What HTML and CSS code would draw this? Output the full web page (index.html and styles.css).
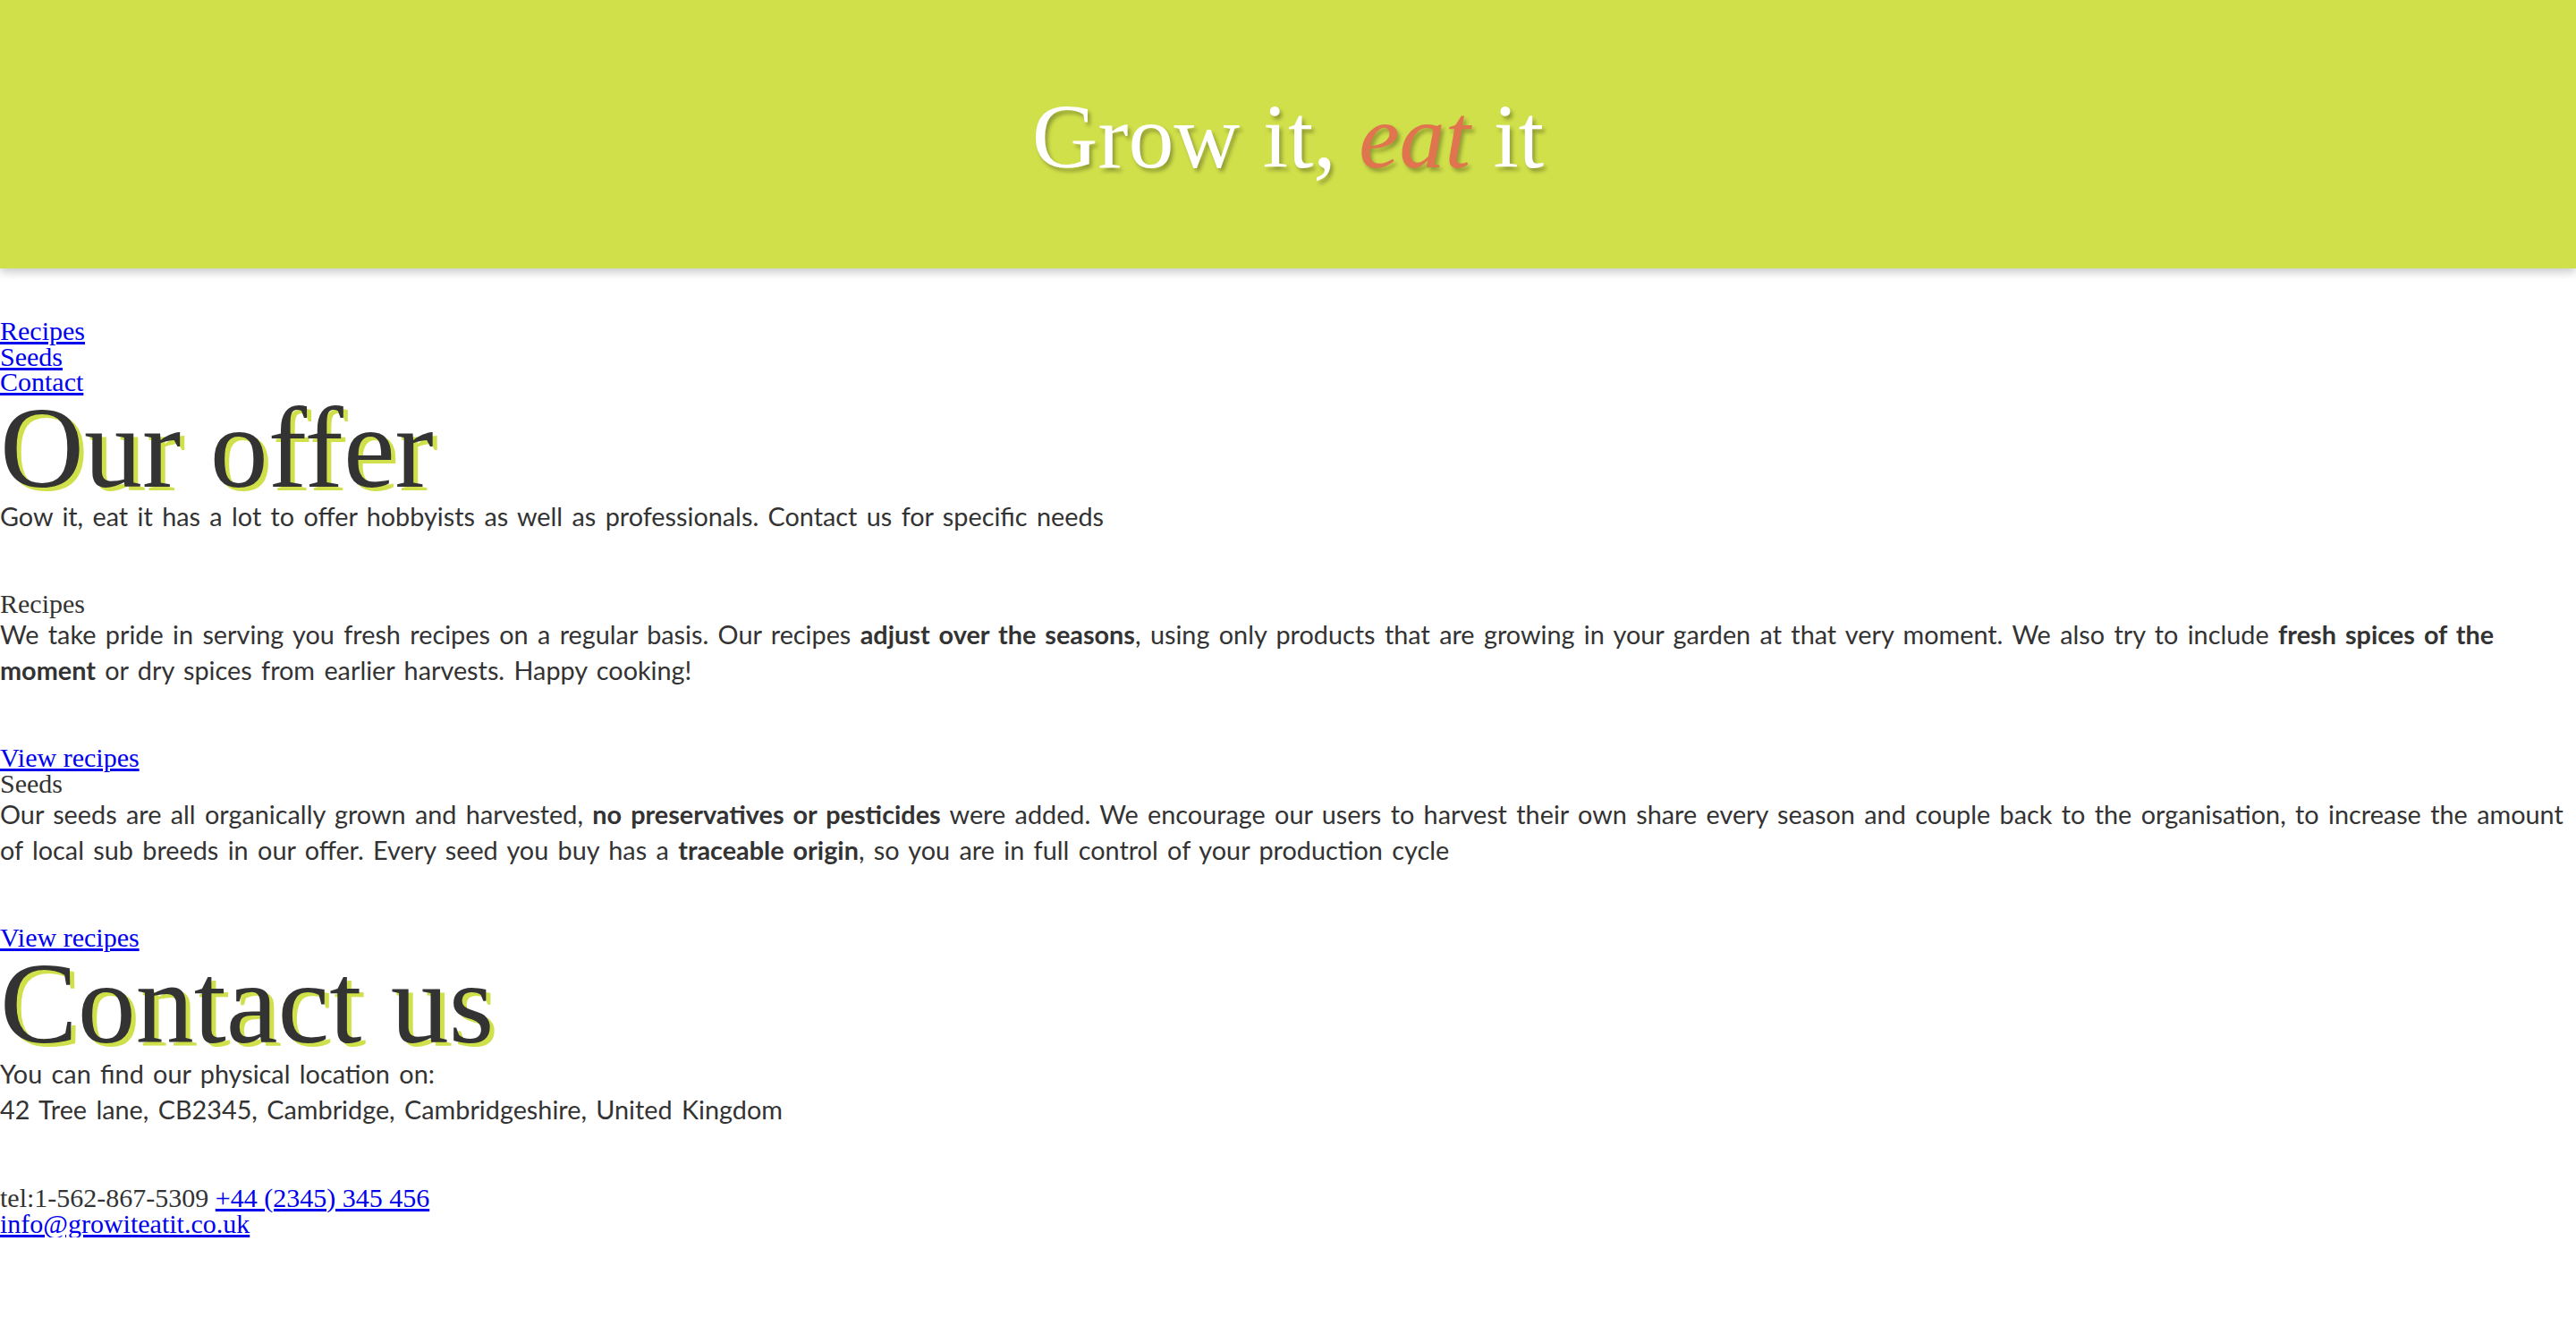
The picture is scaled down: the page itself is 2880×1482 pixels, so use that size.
FILE: index.html
```html
<!DOCTYPE html>
<html lang="en">
<head>
<meta charset="utf-8">
<title>Grow it, eat it</title>
<link rel="stylesheet" href="styles.css">
</head>
<body>
<header class="site-header">
  <h1 class="site-title">Grow it, <em class="accent">eat</em> it</h1>
</header>
<nav class="site-nav">
  <a href="#recipes">Recipes</a>
  <a href="#seeds">Seeds</a>
  <a href="#contact">Contact</a>
</nav>
<main>
  <section class="offer">
    <h2 class="section-title">Our offer</h2>
    <p class="lead">Gow it, eat it has a lot to offer hobbyists as well as professionals. Contact us for specific needs</p>
    <article class="card" id="recipes">
      <h3 class="card-title">Recipes</h3>
      <p class="card-text">We take pride in serving you fresh recipes on a regular basis. Our recipes <strong>adjust over the seasons</strong>, using only products that are growing in your garden at that very moment. We also try to include <strong>fresh spices of the moment</strong> or dry spices from earlier harvests. Happy cooking!</p>
      <a class="card-link" href="#recipes">View recipes</a>
    </article>
    <article class="card" id="seeds">
      <h3 class="card-title">Seeds</h3>
      <p class="card-text">Our seeds are all organically grown and harvested, <strong>no preservatives or pesticides</strong> were added. We encourage our users to harvest their own share every season and couple back to the organisation, to increase the amount of local sub breeds in our offer. Every seed you buy has a <strong>traceable origin</strong>, so you are in full control of your production cycle</p>
      <a class="card-link" href="#seeds">View recipes</a>
    </article>
  </section>
  <section class="contact" id="contact">
    <h2 class="section-title contact-title">Contact us</h2>
    <p class="lead">You can find our physical location on:<br>42 Tree lane, CB2345, Cambridge, Cambridgeshire, United Kingdom</p>
    <div class="contact-lines">
      <div class="contact-line">tel:1-562-867-5309 <a href="tel:+442345345456">+44 (2345) 345 456</a></div>
      <div class="contact-line"><a href="mailto:info@growiteatit.co.uk">info@growiteatit.co.uk</a></div>
    </div>
  </section>
</main>
</body>
</html>
```
FILE: styles.css
```css
html, body {
  margin: 0;
  padding: 0;
}

body {
  font-family: "Liberation Serif", "Times New Roman", serif;
  font-size: 30px;
  line-height: 28.5px;
  color: #333333;
  background: #ffffff;
}

a {
  color: #0000ee;
}

.site-header {
  height: 300px;
  background: #d0e04a;
  box-shadow: 0 4px 10px rgba(0, 0, 0, 0.22);
  display: flex;
  align-items: center;
  justify-content: center;
}

.site-title {
  margin: 0;
  padding-top: 6px;
  font-family: "Liberation Serif", "Times New Roman", serif;
  font-weight: normal;
  font-size: 102px;
  line-height: 110px;
  color: #ffffff;
  text-shadow: 3px 4px 4px rgba(0, 0, 0, 0.3);
}

.accent {
  color: #e0744e;
  font-style: italic;
}

.site-nav {
  margin-top: 56px;
  display: flex;
  flex-direction: column;
  align-items: flex-start;
}

.section-title {
  margin: 4px 0 3px;
  font-family: "Liberation Serif", "Times New Roman", serif;
  font-weight: normal;
  font-size: 130px;
  line-height: 108px;
  color: #333333;
  text-shadow: 5px 4px 0 #cfe04a;
}

.contact-title {
  margin-bottom: 5px;
}

.lead,
.card-text {
  font-family: Lato, "Open Sans", sans-serif;
  font-size: 28.8px;
  line-height: 40px;
  color: #333333;
  word-spacing: 3px;
}

.lead {
  margin: 0 0 64px;
}

.card-title {
  margin: 0;
  font-size: 30px;
  font-weight: normal;
  line-height: 28.5px;
}

.card-text {
  margin: 0 0 64px;
}

.card-text strong {
  font-weight: bold;
}

.card-link {
  display: block;
  width: max-content;
}

.contact-lines {
  display: flex;
  flex-direction: column;
  align-items: flex-start;
  line-height: 29.5px;
}
```
